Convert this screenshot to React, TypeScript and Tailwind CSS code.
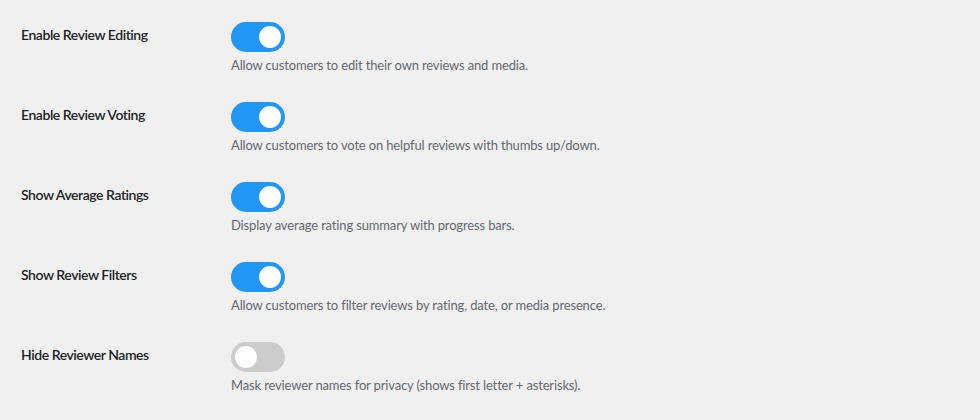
import React from "react";

const rows = [
  { label: "Enable Review Editing", desc: "Allow customers to edit their own reviews and media.", on: true },
  { label: "Enable Review Voting", desc: "Allow customers to vote on helpful reviews with thumbs up/down.", on: true },
  { label: "Show Average Ratings", desc: "Display average rating summary with progress bars.", on: true },
  { label: "Show Review Filters", desc: "Allow customers to filter reviews by rating, date, or media presence.", on: true },
  { label: "Hide Reviewer Names", desc: "Mask reviewer names for privacy (shows first letter + asterisks).", on: false },
];

function Toggle({ on }: { on: boolean }) {
  return (
    <div
      className={
        "relative h-[30px] w-[54px] rounded-full " + (on ? "bg-[#2196f3]" : "bg-[#cccccc]")
      }
    >
      <div
        className={
          "absolute top-[4px] h-[22px] w-[22px] rounded-full bg-white " + (on ? "left-[28px]" : "left-[4px]")
        }
      />
    </div>
  );
}

export default function App() {
  return (
    <div
      className="min-h-[420px] w-full bg-[#f0f0f1] pl-[21px] pt-[22px]"
      style={{ fontFamily: 'Lato, "Open Sans", sans-serif' }}
    >
      {rows.map((r) => (
        <div key={r.label} className="flex h-[80px]">
          <div className="w-[210px] pt-[3px] text-[14px] font-semibold leading-[20px] tracking-[-0.45px] text-[#1d2327]">
            {r.label}
          </div>
          <div className="flex flex-col">
            <Toggle on={r.on} />
            <p className="mt-[3px] text-[13px] leading-[20px] tracking-[-0.15px] text-[#646970]">{r.desc}</p>
          </div>
        </div>
      ))}
    </div>
  );
}
